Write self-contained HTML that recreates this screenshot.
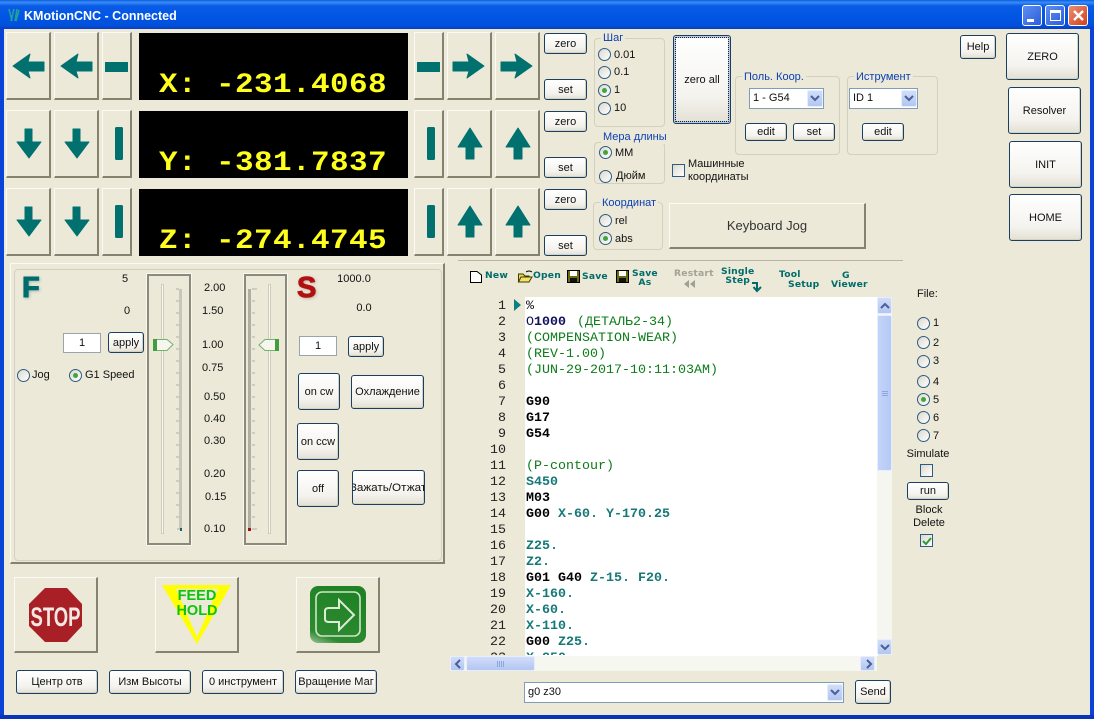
<!DOCTYPE html>
<html><head><meta charset="utf-8"><title>KMotionCNC</title>
<style>
html,body{margin:0;padding:0;background:#ECE9D8}
#w{position:relative;width:1094px;height:719px;overflow:hidden;background:#ECE9D8;font-family:"Liberation Sans",sans-serif;font-size:11px;color:#111}
#w div,#w span.a{position:absolute;box-sizing:border-box}
.t{white-space:nowrap;line-height:14px}
.c{text-align:center;transform:translateX(-50%)}
.j{background:#ECE9D8;border-top:1px solid #fbfaf5;border-left:1px solid #fbfaf5;border-right:2px solid #85826f;border-bottom:2px solid #85826f}
.b{border:1px solid #1b3f63;border-radius:3px;background:linear-gradient(#fff,#f4f3ee 70%,#e3e0d3);display:flex;align-items:center;justify-content:center;white-space:nowrap;overflow:hidden;box-shadow:inset -1px -1px 0 #d6d2c2}
.d{background:#000;color:#ffff1e;font-family:"Liberation Mono",monospace;font-weight:bold;font-size:31px;line-height:34px;white-space:pre;letter-spacing:.4px}
.d span{transform:scaleY(.9);transform-origin:0 25px}
.g{border:1px solid #d3d0bd;border-radius:4px}
.l{color:#0b3fb5;background:#ECE9D8;padding:0 2px;white-space:nowrap;line-height:13px}
.r{width:13px;height:13px;border-radius:50%;border:1px solid #2b5c86;background:linear-gradient(135deg,#dcd9cc,#fff)}
.on::after{content:"";position:absolute;left:3px;top:3px;width:5px;height:5px;border-radius:50%;background:#3fa63f}
.x{width:13px;height:13px;border:1px solid #2b5c86;background:linear-gradient(135deg,#dcd9cc,#fff)}
.s{background:#fff;border:1px solid #7f9db9;line-height:18px;padding-left:4px;white-space:nowrap}
.sb{background:linear-gradient(#d2ddf8,#b2c6f3);border:1px solid #e6edfd;border-radius:2px}
.i{background:#fff;border:1px solid #9aa4ad;text-align:center;line-height:18px}
.tb{font-family:"DejaVu Sans",sans-serif;font-weight:bold;font-size:9.2px;color:#006b6b;line-height:11px;white-space:nowrap;letter-spacing:.2px}
.fr{border:2px solid #8c8a78;outline:1px solid #f8f7f0}
pre{margin:0;font-family:"Liberation Mono",monospace;font-size:13.33px;line-height:16px}
.k{font-weight:bold;color:#000}.v{font-weight:bold;color:#177878}.m{color:#0c7c18}.n{font-weight:bold;color:#10105e}
</style></head><body>
<div id="w">
<!-- title -->
<div style="left:0;top:0;width:1094px;height:29px;background:linear-gradient(#0a5fe0 0,#3a8cf5 8%,#0a5ce6 20%,#0055e3 60%,#0150dc 88%,#0a3fc0 100%)"></div>
<div style="left:0;top:29px;width:4px;height:690px;background:#0a43d8"></div>
<div style="left:1090px;top:29px;width:4px;height:690px;background:#0a43d8"></div>
<div style="left:0;top:715px;width:1094px;height:4px;background:#0a35b8"></div>
<svg style="position:absolute;left:6px;top:7px" width="15" height="16"><path d="M3 2l3 12M8 2l-3 12M11 2l-2 12M13 3l-3 11" stroke="#1fa0a0" stroke-width="1.6" fill="none"/></svg>
<div class="t" style="left:24px;top:9px;color:#fff;font-weight:bold;font-size:12.5px">KMotionCNC - Connected</div>
<div style="left:1022px;top:5px;width:20px;height:21px;border:1px solid #fff;border-radius:3px;background:linear-gradient(135deg,#5f8df0,#2b5fdc)"><div style="left:4px;top:13px;width:7px;height:3px;background:#fff"></div></div>
<div style="left:1045px;top:5px;width:20px;height:21px;border:1px solid #fff;border-radius:3px;background:linear-gradient(135deg,#5f8df0,#2b5fdc)"><div style="left:4px;top:4px;width:11px;height:11px;border:1px solid #fff;border-top-width:3px"></div></div>
<div style="left:1068px;top:5px;width:20px;height:21px;border:1px solid #fff;border-radius:3px;background:linear-gradient(135deg,#ec8f72,#d0401c)"><svg style="position:absolute;left:3px;top:3px" width="13" height="13"><path d="M2 2l9 9M11 2l-9 9" stroke="#fff" stroke-width="2.4"/></svg></div>

<!-- jog buttons -->
<div class="j" style="left:6px;top:32px;width:45px;height:68px"></div><div class="j" style="left:54px;top:32px;width:45px;height:68px"></div><div class="j" style="left:102px;top:32px;width:30px;height:68px"></div>
<div class="j" style="left:6px;top:110px;width:45px;height:68px"></div><div class="j" style="left:54px;top:110px;width:45px;height:68px"></div><div class="j" style="left:102px;top:110px;width:30px;height:68px"></div>
<div class="j" style="left:6px;top:188px;width:45px;height:68px"></div><div class="j" style="left:54px;top:188px;width:45px;height:68px"></div><div class="j" style="left:102px;top:188px;width:30px;height:68px"></div>
<div class="j" style="left:414px;top:32px;width:30px;height:68px"></div><div class="j" style="left:447px;top:32px;width:45px;height:68px"></div><div class="j" style="left:495px;top:32px;width:45px;height:68px"></div>
<div class="j" style="left:414px;top:110px;width:30px;height:68px"></div><div class="j" style="left:447px;top:110px;width:45px;height:68px"></div><div class="j" style="left:495px;top:110px;width:45px;height:68px"></div>
<div class="j" style="left:414px;top:188px;width:30px;height:68px"></div><div class="j" style="left:447px;top:188px;width:45px;height:68px"></div><div class="j" style="left:495px;top:188px;width:45px;height:68px"></div>
<svg style="position:absolute;left:0;top:0" width="1094" height="719" fill="#00716f" stroke="#00716f" stroke-width="1" stroke-linejoin="round">
<path d="M13 66L30 54L28 62H44V71H28L30 78Z"/><path d="M61 66L78 54L76 62H92V71H76L78 78Z"/><rect x="105.500" y="62.500" width="22" height="9"/>
<path d="M25 129H32V142H41L29 158L17 142H25Z"/><path d="M73 129H80V142H89L77 158L65 142H73Z"/><rect x="115.500" y="127.500" width="7" height="32" rx="1"/>
<path d="M25 207H32V220H41L29 236L17 220H25Z"/><path d="M73 207H80V220H89L77 236L65 220H73Z"/><rect x="115.500" y="205.500" width="7" height="32" rx="1"/>
<rect x="417.500" y="62.500" width="22" height="9"/><path d="M484 66L467 54L469 62H453V71H469L467 78Z"/><path d="M532 66L515 54L517 62H501V71H517L515 78Z"/>
<rect x="427.500" y="127.500" width="7" height="32" rx="1"/><path d="M470 128L482 147H474V159H466V147H458Z"/><path d="M518 128L530 147H522V159H514V147H506Z"/>
<rect x="427.500" y="205.500" width="7" height="32" rx="1"/><path d="M470 206L482 225H474V237H466V225H458Z"/><path d="M518 206L530 225H522V237H514V225H506Z"/>
</svg>
<!-- displays -->
<div class="d" style="left:139px;top:33px;width:269px;height:67px;overflow:hidden"><span class="a" style="left:20px;top:35px">X: -231.4068</span></div>
<div class="d" style="left:139px;top:111px;width:269px;height:67px;overflow:hidden"><span class="a" style="left:20px;top:35px">Y: -381.7837</span></div>
<div class="d" style="left:139px;top:189px;width:269px;height:67px;overflow:hidden"><span class="a" style="left:20px;top:35px">Z: -274.4745</span></div>

<div class="b" style="left:544px;top:33px;width:43px;height:21px">zero</div><div class="b" style="left:544px;top:79px;width:43px;height:21px">set</div>
<div class="b" style="left:544px;top:111px;width:43px;height:21px">zero</div><div class="b" style="left:544px;top:157px;width:43px;height:21px">set</div>
<div class="b" style="left:544px;top:189px;width:43px;height:21px">zero</div><div class="b" style="left:544px;top:235px;width:43px;height:21px">set</div>

<!-- groups -->
<div class="g" style="left:594px;top:38px;width:71px;height:89px"></div><div class="l" style="left:601px;top:32px">Шаг</div>
<div class="r" style="left:598px;top:48px"></div><div class="t" style="left:614px;top:48px">0.01</div>
<div class="r" style="left:598px;top:66px"></div><div class="t" style="left:614px;top:65px">0.1</div>
<div class="r on" style="left:598px;top:84px"></div><div class="t" style="left:614px;top:83px">1</div>
<div class="r" style="left:598px;top:102px"></div><div class="t" style="left:614px;top:101px">10</div>
<div class="g" style="left:594px;top:142px;width:71px;height:42px"></div><div class="l" style="left:601px;top:131px">Мера длины</div>
<div class="r on" style="left:599px;top:146px"></div><div class="t" style="left:615px;top:146px">MM</div>
<div class="r" style="left:599px;top:170px"></div><div class="t" style="left:616px;top:169px">Дюйм</div>
<div class="g" style="left:593px;top:202px;width:70px;height:48px"></div><div class="l" style="left:600px;top:197px">Координат</div>
<div class="r" style="left:599px;top:214px"></div><div class="t" style="left:615px;top:214px">rel</div>
<div class="r on" style="left:599px;top:232px"></div><div class="t" style="left:615px;top:232px">abs</div>

<div class="b" style="left:673px;top:35px;width:58px;height:89px;outline:1px dotted #222;outline-offset:-3px;box-shadow:inset 0 0 0 2px #b7cbe9">zero all</div>
<div class="x" style="left:672px;top:164px"></div><div class="t" style="left:688px;top:158px;line-height:13px">Машинные<br>координаты</div>
<div class="j" style="left:669px;top:203px;width:197px;height:46px;display:flex;align-items:center;justify-content:center;font-size:13px;color:#333">Keyboard Jog</div>

<div class="g" style="left:735px;top:76px;width:105px;height:79px"></div><div class="l" style="left:742px;top:71px">Поль. Коор.</div>
<div class="s" style="left:749px;top:88px;width:75px;height:21px;padding-left:3px">1 - G54<div class="sb" style="left:57px;top:1px;width:16px;height:17px"><svg style="position:absolute;left:2px;top:4px" width="10" height="8"><path d="M1 1l4 4 4-4" stroke="#4a5f96" stroke-width="2" fill="none"/></svg></div></div>
<div class="b" style="left:745px;top:123px;width:42px;height:18px">edit</div><div class="b" style="left:793px;top:123px;width:42px;height:18px">set</div>
<div class="g" style="left:847px;top:76px;width:91px;height:79px"></div><div class="l" style="left:854px;top:71px">Иструмент</div>
<div class="s" style="left:849px;top:88px;width:69px;height:21px;padding-left:3px">ID 1<div class="sb" style="left:51px;top:1px;width:16px;height:17px"><svg style="position:absolute;left:2px;top:4px" width="10" height="8"><path d="M1 1l4 4 4-4" stroke="#4a5f96" stroke-width="2" fill="none"/></svg></div></div>
<div class="b" style="left:862px;top:123px;width:42px;height:18px">edit</div>

<div class="b" style="left:960px;top:35px;width:36px;height:24px">Help</div>
<div class="b" style="left:1006px;top:33px;width:73px;height:47px">ZERO</div>
<div class="b" style="left:1008px;top:87px;width:73px;height:47px">Resolver</div>
<div class="b" style="left:1009px;top:141px;width:73px;height:47px">INIT</div>
<div class="b" style="left:1009px;top:194px;width:73px;height:47px">HOME</div>

<!-- F/S panel -->
<div class="j" style="left:10px;top:263px;width:435px;height:301px"></div>
<div class="g" style="left:14px;top:269px;width:428px;height:292px"></div>
<div style="left:22px;top:272px;font:bold 29px/32px 'Liberation Sans',sans-serif;color:#006b6b;-webkit-text-stroke:1px #006b6b;text-shadow:1px 1px 3px #7fa9a6">F</div>
<div style="left:297px;top:272px;font:bold 29px/32px 'Liberation Sans',sans-serif;color:#b01010;-webkit-text-stroke:1px #b01010;text-shadow:1px 1px 3px #b8a09a">S</div>
<div class="t c" style="left:125px;top:272px">5</div><div class="t c" style="left:127px;top:304px">0</div>
<div class="i" style="left:63px;top:333px;width:38px;height:20px">1</div>
<div class="b" style="left:108px;top:332px;width:36px;height:21px">apply</div>
<div class="r" style="left:17px;top:369px"></div><div class="t" style="left:32px;top:368px">Jog</div>
<div class="r on" style="left:69px;top:369px"></div><div class="t" style="left:85px;top:368px">G1 Speed</div>

<div class="fr" style="left:147px;top:274px;width:44px;height:271px"></div>
<div class="fr" style="left:244px;top:274px;width:43px;height:271px"></div>
<svg style="position:absolute;left:0;top:0" width="1094" height="719">
<rect x="161.500" y="284.500" width="2" height="249" fill="#f7f6f0" stroke="#cfccbc" stroke-width="1"/>
<rect x="179" y="289" width="3" height="240" fill="#c9c7b9"/>
<path d="M176 289h3M176 301h3M176 313h3M176 325h3M176 337h3M176 349h3M176 361h3M176 373h3M176 385h3M176 397h3M176 409h3M176 421h3M176 433h3M176 445h3M176 457h3M176 469h3M176 481h3M176 493h3M176 505h3M176 517h3M177 529h5" stroke="#b0ae9e"/>
<rect x="180" y="528" width="2" height="3" fill="#206060"/>
<path d="M153.500 339.500H167L173 344.500L167 350.500H153.500Z" fill="#f6f6ee" stroke="#6fb36f"/><rect x="153" y="339" width="4" height="12" fill="#3f9f3f"/>
<rect x="268.500" y="284.500" width="2" height="249" fill="#f7f6f0" stroke="#cfccbc" stroke-width="1"/>
<rect x="248" y="289" width="3" height="240" fill="#b0aea0"/>
<path d="M252 289h5M252 301h3M252 313h3M252 325h3M252 337h3M252 349h3M252 361h3M252 373h3M252 385h3M252 397h3M252 409h3M252 421h3M252 433h3M252 445h3M252 457h3M252 469h3M252 481h3M252 493h3M252 505h3M252 517h3M252 529h5" stroke="#b0ae9e"/>
<rect x="248" y="528" width="3" height="3" fill="#a01010"/>
<path d="M278.500 339.500H265L259 345L265 350.500H278.500Z" fill="#f6f6ee" stroke="#6fb36f"/><rect x="275" y="339" width="4" height="12" fill="#3f9f3f"/>
</svg>
<div class="t" style="left:204px;top:281px">2.00</div><div class="t" style="left:202px;top:304px">1.50</div><div class="t" style="left:202px;top:338px">1.00</div><div class="t" style="left:202px;top:361px">0.75</div><div class="t" style="left:204px;top:390px">0.50</div><div class="t" style="left:204px;top:412px">0.40</div><div class="t" style="left:204px;top:434px">0.30</div><div class="t" style="left:204px;top:467px">0.20</div><div class="t" style="left:205px;top:490px">0.15</div><div class="t" style="left:204px;top:522px">0.10</div>
<div class="t c" style="left:354px;top:272px">1000.0</div><div class="t c" style="left:364px;top:301px">0.0</div>
<div class="i" style="left:299px;top:336px;width:38px;height:20px">1</div>
<div class="b" style="left:348px;top:336px;width:36px;height:21px">apply</div>
<div class="b" style="left:298px;top:373px;width:42px;height:37px">on cw</div>
<div class="b" style="left:351px;top:375px;width:73px;height:34px">Охлаждение</div>
<div class="b" style="left:297px;top:423px;width:42px;height:37px">on ccw</div>
<div class="b" style="left:297px;top:470px;width:42px;height:37px">off</div>
<div class="b" style="left:352px;top:470px;width:73px;height:35px"><span style="transform:scaleX(1.06)">Зажать/Отжат</span></div>

<!-- big buttons -->
<div class="j" style="left:14px;top:577px;width:84px;height:76px"></div>
<div class="j" style="left:155px;top:577px;width:84px;height:76px"></div>
<div class="j" style="left:296px;top:577px;width:84px;height:76px"></div>
<svg style="position:absolute;left:0;top:0" width="1094" height="719">
<path d="M45 588H67L82 604V626L67 642H45L29 626V604Z" fill="#a82025"/>
<text x="55.500" y="626" text-anchor="middle" textLength="50" lengthAdjust="spacingAndGlyphs" font-family="Liberation Sans" font-weight="bold" font-size="27" fill="#f4e8e4">STOP</text>
<path fill-rule="evenodd" d="M162 585H231L197 644ZM176 589L197 637L218 589Z" fill="#ffff00"/>
<text x="197" y="600" text-anchor="middle" font-family="Liberation Sans" font-weight="bold" font-size="14.500" fill="#0cc40c">FEED</text>
<text x="197" y="615" text-anchor="middle" font-family="Liberation Sans" font-weight="bold" font-size="14.500" fill="#0cc40c">HOLD</text>
<defs><linearGradient id="gg" x1="0" y1="1" x2="0.4" y2="0"><stop offset="0" stop-color="#9cc49c"/><stop offset=".2" stop-color="#2e8a30"/><stop offset="1" stop-color="#1f8225"/></linearGradient></defs>
<rect x="310" y="586" width="56" height="57" rx="8" fill="url(#gg)"/>
<rect x="316" y="592" width="44" height="44" rx="6" fill="none" stroke="#cfe5c8" stroke-width="1.600"/>
<path d="M354 615L339 600V608H329Q325 608 325 611V619Q325 622 329 622H339V630Z" fill="none" stroke="#dcecd6" stroke-width="2"/>
</svg>
<div class="b" style="left:16px;top:670px;width:82px;height:24px">Центр отв</div>
<div class="b" style="left:109px;top:670px;width:82px;height:24px">Изм Высоты</div>
<div class="b" style="left:202px;top:670px;width:82px;height:24px">0 инструмент</div>
<div class="b" style="left:295px;top:670px;width:82px;height:24px">Вращение Маг</div>

<!-- toolbar -->
<div style="left:458px;top:260px;width:445px;height:1px;background:#b8b5a4"></div>
<svg style="position:absolute;left:0;top:0" width="1094" height="719">
<path d="M470.500 271.500H477L481.500 275V282.500H470.500Z" fill="#fff" stroke="#000"/>
<path d="M518.500 282V274H523L525 276H529V282Z" fill="#e8d85a" stroke="#3b3b00"/><path d="M518.500 282L521 277H532L529 282Z" fill="#f6e26a" stroke="#3b3b00"/><path d="M526 272q3-2 6 0" stroke="#000" fill="none"/>
<rect x="567.500" y="270.500" width="12" height="12" fill="#6b6b14" stroke="#000"/><rect x="570" y="271" width="7" height="5" fill="#fff"/><rect x="570" y="278" width="7" height="4" fill="#111"/>
<rect x="616.500" y="270.500" width="12" height="12" fill="#6b6b14" stroke="#000"/><rect x="619" y="271" width="7" height="5" fill="#fff"/><rect x="619" y="278" width="7" height="4" fill="#111"/>
<path d="M689 280V288L684 284ZM695 280V288L690 284Z" fill="#9f9f95"/>
<path d="M752 283H757V290M753.500 287L757 291L761 287" fill="none" stroke="#006b6b" stroke-width="2"/>
</svg>
<div class="tb" style="left:485px;top:270px">New</div>
<div class="tb" style="left:533px;top:270px">Open</div>
<div class="tb" style="left:582px;top:271px">Save</div>
<div class="tb" style="left:632px;top:269px;text-align:center;line-height:9px">Save<br>As</div>
<div class="tb" style="left:674px;top:268px;color:#a3a297">Restart</div>
<div class="tb" style="left:721px;top:268px;text-align:center;line-height:8.500px">Single<br>Step</div>
<div class="tb" style="left:779px;top:269px">Tool</div><div class="tb" style="left:788px;top:279px">Setup</div>
<div class="tb" style="left:842px;top:270px">G</div><div class="tb" style="left:831px;top:279px">Viewer</div>

<!-- editor -->
<div style="left:525px;top:297px;width:353px;height:359px;background:#fff"></div>
<pre style="position:absolute;left:480px;top:299px;width:26px;text-align:right;height:356px;overflow:hidden;color:#222">1
2
3
4
5
6
7
8
9
10
11
12
13
14
15
16
17
18
19
20
21
22
23</pre>
<svg style="position:absolute;left:514px;top:299px" width="8" height="13"><path d="M0 0L7 6L0 12Z" fill="#0a8080"/></svg>
<pre style="position:absolute;left:526px;top:299px;width:350px;height:356px;overflow:hidden">%
<span style="color:#10105e">O</span><span class="n">1000</span> <span class="m" style="margin-left:3px">(ДЕТАЛЬ2-34)</span>
<span class="m">(COMPENSATION-WEAR)</span>
<span class="m">(REV-1.00)</span>
<span class="m">(JUN-29-2017-10:11:03AM)</span>

<span class="k">G90</span>
<span class="k">G17</span>
<span class="k">G54</span>

<span class="m">(P-contour)</span>
<span class="v">S450</span>
<span class="k">M03</span>
<span class="k">G00</span> <span class="v">X-60. Y-170.25</span>

<span class="v">Z25.</span>
<span class="v">Z2.</span>
<span class="k">G01 G40</span> <span class="v">Z-15. F20.</span>
<span class="v">X-160.</span>
<span class="v">X-60.</span>
<span class="v">X-110.</span>
<span class="k">G00</span> <span class="v">Z25.</span>
<span class="v">X-250.</span></pre>
<!-- scrollbars -->
<div style="left:877px;top:297px;width:15px;height:358px;background:#f6f6f0"></div>
<div class="sb" style="left:877px;top:297px;width:15px;height:17px"><svg style="position:absolute;left:2px;top:4px" width="10" height="8"><path d="M1 6l4-4 4 4" stroke="#4a5f96" stroke-width="2" fill="none"/></svg></div>
<div class="sb" style="left:877px;top:315px;width:15px;height:156px;background:linear-gradient(90deg,#c4d3f8,#b6c9f6)"><div style="left:4px;top:75px;width:6px;height:6px;background:repeating-linear-gradient(#8ea6dc 0 1px,transparent 1px 2px)"></div></div>
<div class="sb" style="left:877px;top:639px;width:15px;height:16px"><svg style="position:absolute;left:2px;top:4px" width="10" height="8"><path d="M1 1l4 4 4-4" stroke="#4a5f96" stroke-width="2" fill="none"/></svg></div>
<div style="left:450px;top:656px;width:427px;height:15px;background:#f7f7f2"></div>
<div class="sb" style="left:450px;top:656px;width:15px;height:15px"><svg style="position:absolute;left:3px;top:2px" width="8" height="10"><path d="M6 1L2 5l4 4" stroke="#4a5f96" stroke-width="2" fill="none"/></svg></div>
<div class="sb" style="left:466px;top:656px;width:69px;height:15px"><div style="left:30px;top:4px;width:7px;height:6px;background:repeating-linear-gradient(90deg,#8ea6dc 0 1px,transparent 1px 2px)"></div></div>
<div class="sb" style="left:860px;top:656px;width:15px;height:15px"><svg style="position:absolute;left:4px;top:2px" width="8" height="10"><path d="M2 1l4 4-4 4" stroke="#4a5f96" stroke-width="2" fill="none"/></svg></div>
<div class="s" style="left:524px;top:682px;width:320px;height:21px;padding-left:3px">g0 z30<div class="sb" style="left:302px;top:1px;width:16px;height:17px"><svg style="position:absolute;left:2px;top:4px" width="10" height="8"><path d="M1 1l4 4 4-4" stroke="#4a5f96" stroke-width="2" fill="none"/></svg></div></div>
<div class="b" style="left:855px;top:680px;width:36px;height:24px">Send</div>

<!-- file -->
<div class="t" style="left:917px;top:287px">File:</div>
<div class="r" style="left:917px;top:317px"></div><div class="t" style="left:933px;top:316px">1</div>
<div class="r" style="left:917px;top:336px"></div><div class="t" style="left:933px;top:336px">2</div>
<div class="r" style="left:917px;top:355px"></div><div class="t" style="left:933px;top:354px">3</div>
<div class="r" style="left:917px;top:375px"></div><div class="t" style="left:933px;top:375px">4</div>
<div class="r on" style="left:917px;top:393px"></div><div class="t" style="left:933px;top:393px">5</div>
<div class="r" style="left:917px;top:411px"></div><div class="t" style="left:933px;top:411px">6</div>
<div class="r" style="left:917px;top:429px"></div><div class="t" style="left:933px;top:429px">7</div>
<div class="t c" style="left:928px;top:447px">Simulate</div>
<div class="x" style="left:920px;top:464px"></div>
<div class="b" style="left:907px;top:482px;width:42px;height:18px">run</div>
<div class="t c" style="left:929px;top:504px;line-height:13px">Block<br>Delete</div>
<div class="x" style="left:920px;top:534px"><svg style="position:absolute;left:1px;top:1px" width="10" height="10"><path d="M1 5l3 3 5-6" stroke="#2f9a35" stroke-width="2" fill="none"/></svg></div>
</div>
</body></html>
